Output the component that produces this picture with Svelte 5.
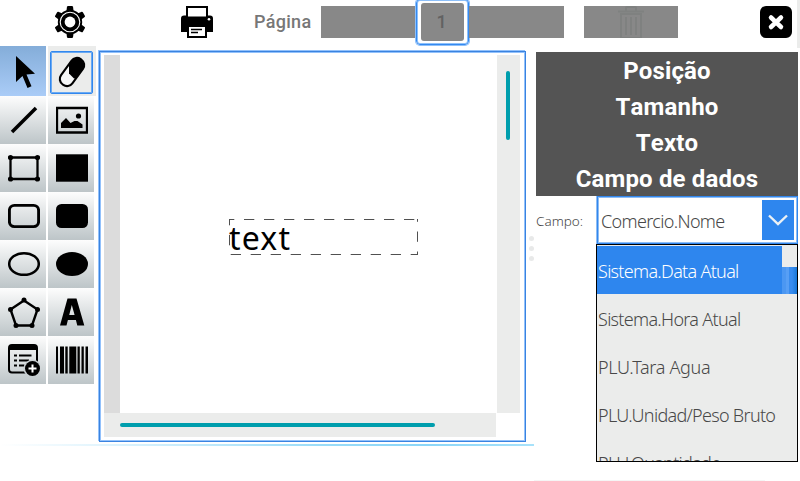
<script>
  const tools = ['select', 'eraser', 'line', 'image', 'rect', 'rectFill', 'round', 'roundFill', 'ellipse', 'ellipseFill', 'polygon', 'text', 'form', 'barcode'];
  const sections = ['Posição', 'Tamanho', 'Texto', 'Campo de dados'];
  const options = ['Sistema.Data Atual', 'Sistema.Hora Atual', 'PLU.Tara Agua', 'PLU.Unidad/Peso Bruto', 'PLU.Quantidade'];
</script>

<div class="app">
  <header>
    <svg class="gear" width="32" height="32" viewBox="0 0 32 32">
      <g>
        {#each [0, 60, 120, 180, 240, 300] as a}
          <path d="M12.4 5 13 .8Q13.2 0 14 0h4q.8 0 1 .8L19.6 5z" transform="rotate({a} 16 16)" />
        {/each}
      </g>
      <circle cx="16" cy="16" r="12.2" />
      <circle cx="16" cy="16" r="9.8" fill="none" stroke="#fff" stroke-width="1.1" />
      <circle cx="16" cy="16" r="5.4" fill="#fff" />
    </svg>
    <svg class="printer" width="32" height="32" viewBox="0 0 32 32">
      <path d="M3 9.5h26q3 0 3 3V26H0V12.5q0-3 3-3z" />
      <path d="M6 1h20v10.500H6z" fill="#fff" stroke="#000" stroke-width="2" />
      <path d="M5 12.500h22" stroke="#000" stroke-width="2.500" />
      <path d="M7 20h18v11H7z" fill="#fff" stroke="#000" stroke-width="2" />
      <path d="M10 23.500h11M10 26.500h7" stroke="#000" stroke-width="1.300" />
      <circle cx="28" cy="13.300" r="1.300" fill="#fff" />
    </svg>
    <span class="label">Página</span>
    <div class="pager">
      <div class="seg"></div>
      <div class="page"><span>1</span></div>
      <div class="seg"></div>
    </div>
    <div class="trash">
      <svg width="28" height="32" viewBox="0 0 28 32" fill="none" stroke="#7f8180" stroke-width="2">
        <path d="M1 5.500h26M9 5V2q0-1 1-1h8q1 0 1 1v3M4 8h20v24H4zM9 11v18M14 11v18M19 11v18" />
      </svg>
    </div>
    <svg class="close" width="32" height="32" viewBox="0 0 32 32">
      <rect width="32" height="32" rx="6" />
      <path d="m11 11.500 10 9.500M21 11.500 11 21" stroke="#fff" stroke-width="4.500" stroke-linecap="round" />
    </svg>
    <i class="edge"></i>
  </header>

  <main>
    <nav>
      {#each tools as t}
        <div class="cell {t}">
          {#if t === 'select'}
            <svg width="32" height="32" viewBox="0 0 32 32"><path d="M8 0v26l6.500-6 5 12 4-1.700L18.500 18.500 27 17.700z" /></svg>
          {:else if t === 'eraser'}
            <div class="focus">
              <svg width="32" height="32" viewBox="0 0 32 32">
                <clipPath id="rubber"><path d="M13 0h19v22.500H18l-5-5z" /></clipPath>
                <rect x="9" y="0.500" width="14" height="31" rx="6.500" fill="#f6f7f7" transform="rotate(36 16 16)" />
                <g clip-path="url(#rubber)"><rect x="9" y="0.500" width="14" height="31" rx="6.500" transform="rotate(36 16 16)" /></g>
                <rect x="9" y="0.500" width="14" height="31" rx="6.500" fill="none" stroke="#000" stroke-width="2.100" transform="rotate(36 16 16)" />
              </svg>
            </div>
          {:else}
            <svg width="32" height="32" viewBox="0 0 32 32" fill="none" stroke="#000" stroke-width="2">
              {#if t === 'line'}
                <path d="M4 28 28 4" stroke-width="3.600" />
              {:else if t === 'image'}
                <path d="M1 4h30v24.500H1z" stroke-width="2.300" />
                <path d="M5 24v-5l5-5 4.500 5 4-2h3l5 3.500V24z" fill="#000" stroke="none" />
                <circle cx="22.500" cy="12" r="2.600" fill="#000" stroke="none" />
              {:else if t === 'rect'}
                <path d="M2.500 5.500h27V27h-27z" stroke-width="2.300" />
                {#each [[2.5, 5.5], [29.5, 5.5], [2.5, 27], [29.5, 27]] as [x, y]}
                  <circle cx={x} cy={y} r="2.600" fill="#000" stroke="none" />
                {/each}
              {:else if t === 'rectFill'}
                <path d="M0 2.300h32v27.400H0z" fill="#000" stroke="none" />
              {:else if t === 'round'}
                <rect x="1.400" y="5.400" width="29.200" height="21.200" rx="5" stroke-width="2.900" />
              {:else if t === 'roundFill'}
                <rect y="4" width="32" height="24" rx="5.500" fill="#000" stroke="none" />
              {:else if t === 'ellipse'}
                <ellipse cx="16" cy="16" rx="14.800" ry="10.800" stroke-width="2.500" />
              {:else if t === 'ellipseFill'}
                <ellipse cx="16" cy="16" rx="16" ry="12" fill="#000" stroke="none" />
              {:else if t === 'polygon'}
                <path d="M16 4.500 29.500 13.500 24 29.500H8L2.500 13.500z" stroke-width="2.400" />
                {#each [[16, 4], [29.5, 13.5], [24, 29.5], [8, 29.5], [2.5, 13.5]] as [x, y]}
                  <circle cx={x} cy={y} r="2.500" fill="#000" stroke="none" />
                {/each}
              {:else if t === 'text'}
                <path d="M11.500 2.500h9L28.300 29.500h-7l-1.400-5.500h-8l-1.400 5.500H4zM15.800 9l-2.600 10h5.400z" fill="#000" fill-rule="evenodd" stroke="none" />
              {:else if t === 'form'}
                <rect x="1" y="1" width="28" height="27.500" rx="3" />
                <path d="M1 4q0-3 3-3h22q3 0 3 3v2H1z" fill="#000" stroke="none" />
                <path d="M6 11.500h3M11 11.500h12.500M6 16.500h3M11 16.500h10M6 21.500h3M11 21.500h5.500" />
                <circle cx="24.500" cy="24.500" r="9" fill="#c9cfd2" stroke="none" />
                <circle cx="24.500" cy="24.500" r="7.500" fill="#000" stroke="none" />
                <path d="M20.500 24.500h8M24.500 20.500v8" stroke="#fff" />
              {:else}
                <path d="M0 2.500h2v27H0zM4 2.500h4v27H4zM9.300 2.500h2.400v27H9.300zM13.300 2.500h7v27h-7zM21.500 2.500h2.300v27h-2.300zM25.500 2.500h2.300v27h-2.300zM29.500 2.500H32v27h-2.500z" fill="#000" stroke="none" />
              {/if}
            </svg>
          {/if}
        </div>
      {/each}
    </nav>

    <section class="editor">
      <div class="upper">
        <div class="ruler"></div>
        <div class="paper">
          <div class="object">
            <svg width="190" height="37" viewBox="0 0 190 37" fill="none" stroke="#505050" stroke-width="1" stroke-dasharray="10.300 9.700">
              <path d="M0 .5h189" stroke-dashoffset="5" />
              <path d="M188.500 0v36" stroke-dashoffset="7.500" />
              <path d="M189 35.500H0" stroke-dashoffset="3" />
              <path d="M.5 0v36" stroke-dashoffset="4" />
            </svg>
            <span>text</span>
          </div>
        </div>
        <div class="vtrack"><i></i></div>
      </div>
      <div class="htrack"><i></i></div>
    </section>

    <div class="grip"><i></i><i></i><i></i></div>

    <aside>
      <div class="sections">
        {#each sections as name}<h2>{name}</h2>{/each}
      </div>
      <div class="field">
        <span class="name">Campo:</span>
        <div class="combo">
          <span>Comercio.Nome</span>
          <div class="arrow">
            <svg width="20" height="12" viewBox="0 0 20 12"><path d="m1 1.500 9 8.500 9-8.500" fill="none" stroke="#ebf1f5" stroke-width="2.400" /></svg>
          </div>
        </div>
      </div>
      <div class="list">
        <div class="rows">
          {#each options as o, i}<div class="row r{i}" class:sel={i === 0}>{o}</div>{/each}
        </div>
        <div class="scroll"><i></i></div>
      </div>
    </aside>
  </main>
  <div class="rule"></div>
  <div class="foot"></div>
</div>

<style>
  .app { width: 800px; height: 481px; background: #fff; overflow: hidden; display: flex; flex-direction: column; font-family: "Noto Sans", sans-serif; }
  svg { display: block; flex: none; }
  header { height: 46px; flex: none; display: flex; align-items: flex-start; }
  .gear { margin: 6px 0 0 54px; }
  .printer { margin: 6px 0 0 95px; }
  .label { width: 67px; margin: 10px 0 0 41px; font: 500 18px/24px Roboto, sans-serif; letter-spacing: .3px; color: #777; }
  .pager { display: flex; margin-top: -1px; width: 243px; }
  .seg { height: 32px; background: #888; margin-top: 7px; flex: 1; }
  .seg:first-child { flex: 0 0 95px; }
  .page { width: 53px; height: 46px; flex: none; box-sizing: border-box; border: 1px solid #3489f0; box-shadow: inset 0 0 0 1px #8dc0fa, 0 0 0 1px #8dc0fa; border-radius: 4px; padding: 4px; }
  .page span { display: block; height: 38px; border-radius: 3px; background: #888; color: #626262; font: 500 18px/37px Roboto, sans-serif; text-align: center; text-indent: -2px; margin-top: -1px; }
  .trash { margin: 6px 0 0 20px; width: 94px; height: 32px; background: #888; display: flex; justify-content: center; }
  .close { margin: 6px 0 0 82px; }
  .edge { width: 3px; height: 48px; background: #ebeceb; margin-left: 5px; flex: none; }
  main { display: flex; height: 398px; flex: none; align-items: flex-start; }
  nav { width: 96px; display: grid; grid-template-columns: 46px 48px; column-gap: 2px; grid-template-rows: 50px repeat(6, 48px); flex: none; }
  .cell { width: 46px; display: flex; align-items: center; justify-content: center; background: linear-gradient(#fdfdfd, #bdc5c8); padding-left: 1px; box-sizing: border-box; }
  .cell.select { background: linear-gradient(#84add9, #aaccf7); padding: 2px 0 0 2px; }
  .cell.eraser { width: 48px; background: #ebeceb; padding: 0; }
  .focus { width: 43px; height: 43px; margin-right: 1px; margin-top: 2px; border: 1px solid #3287ed; box-shadow: inset 0 0 0 1px #6aaaf3; border-radius: 2px; box-sizing: border-box; display: flex; align-items: center; justify-content: center; }
  .editor { box-sizing: border-box; width: 427px; height: 391px; flex: none; margin: 5px 0 0 3px; border: 1px solid #3a83e0; box-shadow: inset 0 0 0 1px #92c1fb, -1px -1px 0 #92c1fb; padding: 3px 4px; }
  .upper { display: flex; height: 358px; }
  .ruler { width: 16px; background: #dcdcdc; }
  .paper { width: 377px; }
  .vtrack { width: 23px; background: #ebeceb; }
  .vtrack i { display: block; width: 4px; height: 69px; margin: 16px 0 0 9px; border-radius: 2px; background: #009ead; }
  .htrack { width: 392px; height: 24px; background: #ebeceb; box-sizing: border-box; padding: 10px 0 0 16px; }
  .htrack i { display: block; width: 315px; height: 4px; border-radius: 2px; background: #009ead; }
  .object { width: 190px; height: 37px; margin: 164px 0 0 109px; display: grid; }
  .object > * { grid-area: 1 / 1; }
  .object span { font-size: 32px; line-height: 38px; letter-spacing: 1.200px; color: #000; }
  .grip { width: 10px; margin-top: 190px; display: flex; flex-direction: column; gap: 5px; align-items: center; flex: none; }
  .grip i { width: 5px; height: 5px; border-radius: 50%; background: #e8e9e9; }
  aside { width: 262px; margin-top: 6px; flex: none; }
  .sections { background: #545454; height: 144px; }
  h2 { margin: 0; height: 36px; font: 700 24px/39px Roboto, sans-serif; font-kerning: none; letter-spacing: .15px; color: #fff; text-align: center; }
  .field { display: flex; height: 48px; color: #484848; font-weight: 300; }
  .name { width: 61px; font-size: 13.500px; line-height: 50px; }
  .combo { width: 201px; height: 48px; box-sizing: border-box; border: 1px solid #3287ed; box-shadow: inset 0 0 0 1px #8dbdf5, -1px 0 0 #8dbdf5; display: flex; justify-content: space-between; padding: 3px; font-size: 18px; line-height: 43px; letter-spacing: -.66px; }
  .arrow { width: 32px; height: 40px; background: #2e86ee; display: flex; align-items: center; justify-content: center; }
  .list { margin-left: 60px; width: 202px; height: 218px; box-sizing: border-box; border: 1px solid #000; background: #ebeceb; display: flex; overflow: hidden; }
  .rows { width: 185px; height: 215px; padding-top: 1px; flex: none; }
  .row { height: 48px; box-sizing: border-box; padding-left: 1px; font-size: 18px; line-height: 51px; font-weight: 300; letter-spacing: -.7px; color: #484848; white-space: nowrap; }
  .r2 { letter-spacing: -.32px; }
  .sel { background: #2e86ee; color: #fff; }
  .scroll { flex: 1; padding-top: 22px; }
  .scroll i { display: block; height: 27px; background: linear-gradient(90deg, #4b97f2 0 4px, #579ff5 4px 7px, #388cef 7px 10px, #1878d8); }
  .rule { width: 534px; height: 2px; flex: none; background: linear-gradient(90deg, #fff, #e0f4fd 20%, #9adcf8 60%, #8bd6f8 80%, #a8e2fa); }
  .foot { width: 231px; height: 1px; margin: 34px 0 0 534px; background: #f5f5f5; flex: none; }
</style>
